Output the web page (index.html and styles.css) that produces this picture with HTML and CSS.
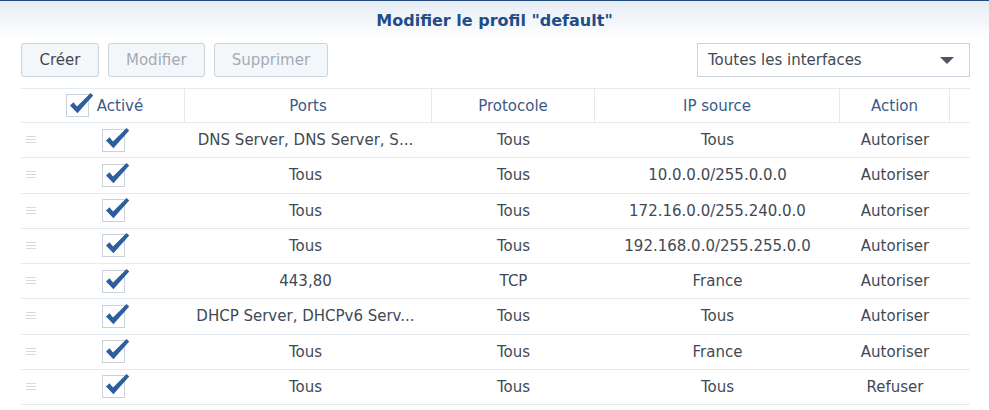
FILE: index.html
```html
<!DOCTYPE html>
<html lang="fr">
<head>
  <meta charset="UTF-8" />
  <title>Modifier le profil "default"</title>
  <meta name="viewport" content="width=device-width, initial-scale=1.0" />
  <link rel="stylesheet" href="styles.css">
</head>
<body>
  <div class="dialog">
    <div class="dialog-title">Modifier le profil "default"</div>

    <div class="toolbar">
      <button class="btn">Créer</button>
      <button class="btn" disabled>Modifier</button>
      <button class="btn" disabled>Supprimer</button>
      <div class="spacer"></div>
      <div class="select">
        <span>Toutes les interfaces</span>
        <span class="caret"></span>
      </div>
    </div>

    <div class="grid" id="rules">
      <div class="head">
        <div class="cell first"><span class="check"></span><span>Activé</span></div>
        <div class="cell">Ports</div>
        <div class="cell">Protocole</div>
        <div class="cell">IP source</div>
        <div class="cell">Action</div>
        <div class="cell"></div>
      </div>
    </div>
  </div>

  <script>
    // ports text is already shortened the way the list shows it
    const rules = [
      ["DNS Server, DNS Server, S...", "Tous", "Tous", "Autoriser"],
      ["Tous", "Tous", "10.0.0.0/255.0.0.0", "Autoriser"],
      ["Tous", "Tous", "172.16.0.0/255.240.0.0", "Autoriser"],
      ["Tous", "Tous", "192.168.0.0/255.255.0.0", "Autoriser"],
      ["443,80", "TCP", "France", "Autoriser"],
      ["DHCP Server, DHCPv6 Serv...", "Tous", "Tous", "Autoriser"],
      ["Tous", "Tous", "France", "Autoriser"],
      ["Tous", "Tous", "Tous", "Refuser"]
    ];

    const checkSvg =
      '<svg width="28" height="26" viewBox="0 0 28 26">' +
      '<rect x="0.5" y="3.5" width="22" height="22" fill="#fff" stroke="#c9d2dc"/>' +
      '<path d="M4 14.5 L7.5 11.2 L11 15.6 L24.6 2 L27.2 4.4 L11.4 22.2 Z" fill="#2d5e9e"/>' +
      '</svg>';

    const grid = document.getElementById("rules");
    let html = "";
    for (const r of rules) {
      html += `<div class="row">
        <div class="cell handle"><span></span><span></span><span></span></div>
        <div class="cell">${checkSvg}</div>
        <div class="cell ports">${r[0]}</div>
        <div class="cell">${r[1]}</div>
        <div class="cell">${r[2]}</div>
        <div class="cell">${r[3]}</div>
        <div class="cell"></div>
      </div>`;
    }
    grid.insertAdjacentHTML("beforeend", html);
    document.querySelector(".head .check").innerHTML = checkSvg;
  </script>
</body>
</html>
```

FILE: styles.css
```css
:root {
  --title: #1f4d89;
  --text: #414a54;
  --head-text: #3b5b86;
  --line: #e4eaf0;
  --border: #c8d3de;
}

body {
  margin: 0;
  background: #fff;
  font-family: "DejaVu Sans", Verdana, sans-serif;
  font-size: 15px;
  color: var(--text);
}

.dialog {
  border-top: 1px solid #22497c;
  background: linear-gradient(#e7edf4, #ffffff 40px);
}

.dialog-title {
  height: 39px;
  line-height: 40px;
  text-align: center;
  font-size: 16px;
  font-weight: bold;
  color: var(--title);
}

.toolbar {
  display: flex;
  align-items: center;
  gap: 9px;
  padding: 3px 19px 0 21px;
  height: 34px;
}

.spacer {
  flex: 1;
}

.btn {
  height: 34px;
  min-width: 78px;
  padding: 0 17px;
  font-family: inherit;
  font-size: 15px;
  color: #3f4852;
  background: #f4f7fa;
  border: 1px solid var(--border);
  border-radius: 3px;
}

.btn:disabled {
  color: #a3abb4;
}

.select {
  width: 273px;
  height: 34px;
  box-sizing: border-box;
  display: flex;
  align-items: center;
  justify-content: space-between;
  padding: 0 15px 0 10px;
  background: #fff;
  border: 1px solid var(--border);
}

.caret {
  width: 0;
  height: 0;
  border-left: 7px solid transparent;
  border-right: 7px solid transparent;
  border-top: 7px solid #4e5761;
}

.grid {
  margin: 11px 19px 0 21px;
}

.head,
.row {
  display: grid;
  grid-template-columns: 20px 144px 247px 163px 245px 110px 1fr;
  text-align: center;
}

.head {
  height: 35px;
  box-sizing: border-box;
  border-top: 1px solid var(--line);
  border-bottom: 1px solid var(--line);
  color: var(--head-text);
}

.head .cell {
  border-right: 1px solid var(--line);
}

.head .cell:last-child {
  border-right: none;
}

.head .first {
  grid-column: span 2;
  gap: 9px;
  padding-left: 4px;
}

.row {
  height: 35.25px;
  box-sizing: border-box;
  border-bottom: 1px solid var(--line);
}

.cell {
  display: flex;
  align-items: center;
  justify-content: center;
  min-width: 0;
  white-space: nowrap;
}

.ports {
  padding-right: 6px;
}

.cell svg {
  margin: -3px -6px 0 0;
}

.check {
  display: flex;
}

.handle {
  flex-direction: column;
  align-items: flex-start;
  gap: 2px;
  padding-left: 5px;
  margin-top: -1px;
}

.handle span {
  width: 10px;
  height: 1px;
  background: #d3d9e0;
}
```
